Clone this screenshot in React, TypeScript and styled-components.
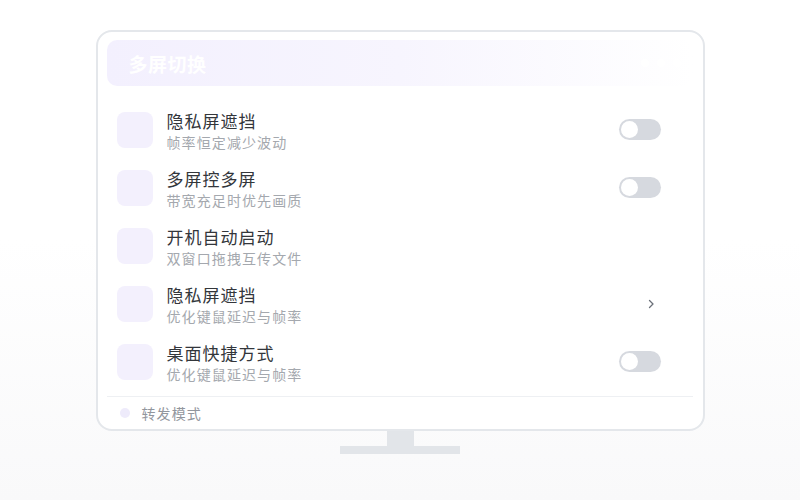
import React from 'react';
import styled, { createGlobalStyle } from 'styled-components';

const GlobalStyle = createGlobalStyle`
  html, body {
    margin: 0;
    padding: 0;
  }
  body {
    font-family: "Noto Sans CJK SC", "Noto Sans", sans-serif;
  }
`;

const Page = styled.div`
  width: 800px;
  height: 500px;
  background: linear-gradient(to bottom, #ffffff 0%, #ffffff 48%, #f9f9fa 100%);
  display: flex;
  flex-direction: column;
  align-items: center;
  padding-top: 30px;
  box-sizing: border-box;
`;

const Screen = styled.div`
  width: 609px;
  height: 401px;
  box-sizing: border-box;
  border: 2px solid #e4e7eb;
  border-radius: 16px;
  background: #fff;
  padding: 8px 10px 0 9px;
  display: flex;
  flex-direction: column;
`;

const Header = styled.div`
  height: 46px;
  border-radius: 10px;
  background: linear-gradient(to right, #f3f0fe 0%, #f7f5fe 50%, #ffffff 100%);
  display: flex;
  align-items: center;
  justify-content: space-between;
  padding: 0 12px 0 22px;
`;

const HeaderTitle = styled.div`
  color: #ffffff;
  font-size: 19px;
  font-weight: 700;
  letter-spacing: 0.5px;
`;

const Dots = styled.div`
  display: flex;
  gap: 8px;
`;

const Dot = styled.span`
  width: 8px;
  height: 8px;
  border-radius: 50%;
  background: #ffffff;
`;

const List = styled.div`
  display: flex;
  flex-direction: column;
  padding-top: 15px;
`;

const Row = styled.div`
  height: 58px;
  display: flex;
  align-items: center;
  padding: 0 32px 0 10px;
`;

const IconBox = styled.div`
  width: 36px;
  height: 36px;
  border-radius: 8px;
  background: #f3f0fd;
  flex-shrink: 0;
`;

const Texts = styled.div`
  flex: 1;
  margin-left: 14px;
  padding-top: 2px;
  display: flex;
  flex-direction: column;
`;

const Title = styled.div`
  font-size: 17px;
  line-height: 22px;
  color: #33363b;
  letter-spacing: 1px;
`;

const Sub = styled.div`
  font-size: 14px;
  line-height: 21px;
  color: #a4a8ae;
  letter-spacing: 1.1px;
`;

const Toggle = styled.div`
  width: 42px;
  height: 21px;
  border-radius: 11px;
  background: #d6d9df;
  position: relative;
  margin-top: -1px;
  &::after {
    content: '';
    position: absolute;
    left: 2px;
    top: 2px;
    width: 17px;
    height: 17px;
    border-radius: 50%;
    background: #fff;
  }
`;

const Chevron = styled.svg`
  width: 10px;
  height: 10px;
  margin-right: 5px;
`;

const Divider = styled.div`
  height: 1px;
  background: #eef0f3;
  margin-top: 5px;
`;

const Footer = styled.div`
  flex: 1;
  display: flex;
  align-items: center;
  padding-left: 13px;
  gap: 12px;
`;

const FooterDot = styled.span`
  width: 10px;
  height: 10px;
  border-radius: 50%;
  background: #eeebfb;
`;

const FooterText = styled.span`
  font-size: 14px;
  color: #92969d;
  letter-spacing: 1.1px;
`;

const Neck = styled.div`
  width: 27px;
  height: 15px;
  background: #e2e5e9;
`;

const Base = styled.div`
  width: 120px;
  height: 8px;
  background: #e2e5e9;
`;

type Item = { title: string; sub: string; action: 'toggle' | 'chevron' | 'none' };

const items: Item[] = [
  { title: '隐私屏遮挡', sub: '帧率恒定减少波动', action: 'toggle' },
  { title: '多屏控多屏', sub: '带宽充足时优先画质', action: 'toggle' },
  { title: '开机自动启动', sub: '双窗口拖拽互传文件', action: 'none' },
  { title: '隐私屏遮挡', sub: '优化键鼠延迟与帧率', action: 'chevron' },
  { title: '桌面快捷方式', sub: '优化键鼠延迟与帧率', action: 'toggle' },
];

export default function App() {
  return (
    <Page>
      <GlobalStyle />
      <Screen>
        <Header>
          <HeaderTitle>多屏切换</HeaderTitle>
          <Dots>
            <Dot />
            <Dot />
            <Dot />
          </Dots>
        </Header>
        <List>
          {items.map((item, i) => (
            <Row key={i}>
              <IconBox />
              <Texts>
                <Title>{item.title}</Title>
                <Sub>{item.sub}</Sub>
              </Texts>
              {item.action === 'toggle' && <Toggle />}
              {item.action === 'chevron' && (
                <Chevron viewBox="0 0 10 10">
                  <path d="M3.5 1.5 L7 5 L3.5 8.5" fill="none" stroke="#6b7079" strokeWidth="1.3" strokeLinecap="round" strokeLinejoin="round" />
                </Chevron>
              )}
            </Row>
          ))}
        </List>
        <Divider />
        <Footer>
          <FooterDot />
          <FooterText>转发模式</FooterText>
        </Footer>
      </Screen>
      <Neck />
      <Base />
    </Page>
  );
}
